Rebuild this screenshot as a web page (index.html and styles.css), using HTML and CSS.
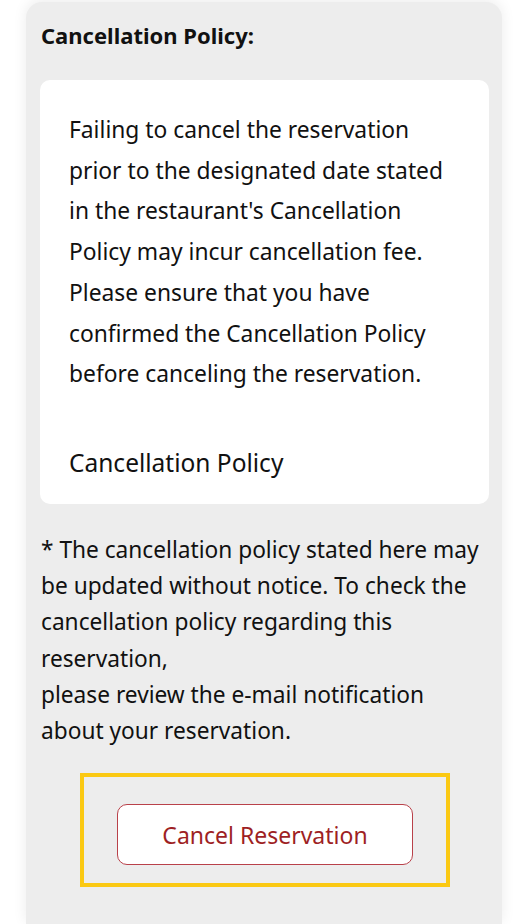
FILE: index.html
```html
<!DOCTYPE html>
<html lang="en">
<head>
<meta charset="utf-8">
<title>Cancellation Policy</title>
<link rel="stylesheet" href="styles.css">
</head>
<body>
<main class="card">
  <h2 class="card-title">Cancellation Policy:</h2>
  <section class="policy-box">
    <p class="policy-text">Failing to cancel the reservation prior to the designated date stated in the restaurant's Cancellation Policy may incur cancellation fee. Please ensure that you have confirmed the Cancellation Policy before canceling the reservation.</p>
    <p class="policy-link">Cancellation Policy</p>
  </section>
  <p class="note">* The cancellation policy stated here may be updated without notice. To check the cancellation policy regarding this reservation,<br>please review the e-mail notification about your reservation.</p>
  <div class="action-frame">
    <button class="cancel-btn" type="button">Cancel Reservation</button>
  </div>
</main>
</body>
</html>
```
FILE: styles.css
```css
html, body {
  margin: 0;
  padding: 0;
  background: #ffffff;
}
body {
  font-family: "Noto Sans", "Open Sans", sans-serif;
  color: #111;
}
.card {
  box-sizing: border-box;
  width: 476px;
  min-height: 922px;
  margin: 2px 0 0 26px;
  padding: 0 13px 0 14px;
  background: #ededed;
  border-radius: 16px 16px 0 0;
  box-shadow: 0 -2px 14px rgba(0, 0, 0, 0.08);
  display: flex;
  flex-direction: column;
}
.card-title {
  margin: 0;
  padding: 20px 0 0 1px;
  font-size: 22px;
  font-weight: 700;
  line-height: 26px;
}
.policy-box {
  margin-top: 32px;
  background: #fff;
  border-radius: 10px;
  padding: 30px 40px 22px 29px;
  height: 424px;
  box-sizing: border-box;
}
.policy-text {
  margin: 0;
  font-size: 22.8px;
  line-height: 40.7px;
}
.policy-link {
  margin: 48px 0 0;
  font-size: 24.5px;
  line-height: 40.7px;
}
.note {
  margin: 28px 0 0 1px;
  font-size: 22.7px;
  line-height: 36.2px;
}
.action-frame {
  align-self: flex-start;
  margin: 24px 0 0 40px;
  box-sizing: border-box;
  width: 370px;
  height: 114px;
  padding-top: 27px;
  border: 4px solid #fbc913;
  display: flex;
  align-items: flex-start;
  justify-content: center;
}
.cancel-btn {
  width: 296px;
  height: 61px;
  background: #fff;
  border: 1px solid #b9414a;
  border-radius: 10px;
  color: #9e1f24;
  font-family: inherit;
  font-size: 23px;
}
```
